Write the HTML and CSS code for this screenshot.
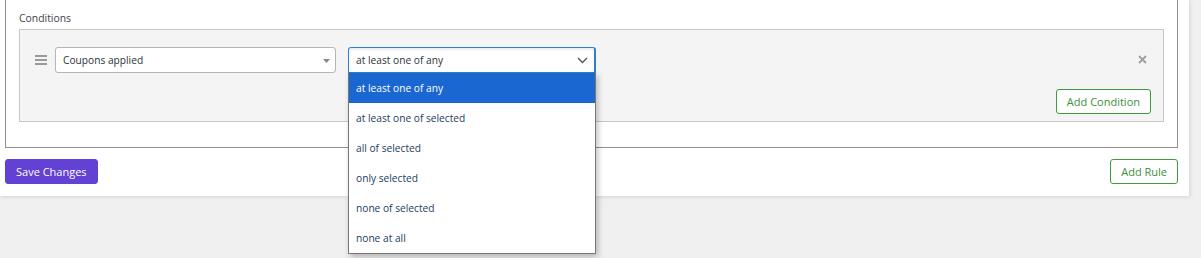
FILE: index.html
```html
<!DOCTYPE html>
<html>
<head>
<meta charset="utf-8">
<link rel="stylesheet" href="styles.css">
</head>
<body>
<div class="card">
  <div class="rule">
    <div class="label">Conditions</div>
    <div class="conditions">
      <div class="row">
        <span class="handle"><i></i><i></i><i></i></span>
        <div class="select sel1">
          <span>Coupons applied</span>
          <svg class="tri" width="7" height="4" viewBox="0 0 7 4"><path d="M0 0h7L3.5 4z" fill="#888"/></svg>
        </div>
        <div class="select sel2">
          <span>at least one of any</span>
          <svg class="chev" width="11" height="7" viewBox="0 0 11 7"><path d="M1 1l4.5 4.5L10 1" fill="none" stroke="#555" stroke-width="1.4"/></svg>
          <ul class="menu">
            <li class="active">at least one of any</li>
            <li>at least one of selected</li>
            <li>all of selected</li>
            <li>only selected</li>
            <li>none of selected</li>
            <li>none at all</li>
          </ul>
        </div>
        <svg class="close" width="9" height="9" viewBox="0 0 9 9"><path d="M1 1l7 7M8 1L1 8" stroke="#9e9e9e" stroke-width="1.8"/></svg>
      </div>
      <div class="cond-foot">
        <button class="btn-green">Add Condition</button>
      </div>
    </div>
  </div>
  <div class="actions">
    <button class="btn-save">Save Changes</button>
    <button class="btn-green">Add Rule</button>
  </div>
</div>
</body>
</html>
```

FILE: styles.css
```css
html, body {
  margin: 0;
  padding: 0;
  background: #f0f0f0;
  font-family: "Open Sans", "Noto Sans", sans-serif;
  font-size: 10px;
  color: #2c3338;
}
body {
  min-height: 258px;
}
.card {
  width: 1189px;
  height: 196px;
  background: #fff;
  box-shadow: 1px 1px 4px rgba(0,0,0,0.12);
  box-sizing: border-box;
  padding: 0 11px 0 5px;
}
.rule {
  border: 1px solid #8f8f8f;
  border-top: none;
  height: 148px;
  box-sizing: border-box;
  padding: 12px 13px 0 13px;
}
.label {
  font-size: 10.4px;
  color: #3c434a;
  line-height: 13px;
  height: 17px;
}
.conditions {
  background: #f4f4f4;
  border: 1px solid #c8c8c8;
  height: 93px;
  box-sizing: border-box;
  padding: 17px 12px 0 15px;
}
.row {
  display: flex;
  align-items: center;
  height: 26px;
}
.handle {
  display: flex;
  flex-direction: column;
  gap: 2px;
  width: 12px;
  margin-right: 8px;
}
.handle i {
  display: block;
  height: 2px;
  background: #9a9a9a;
}
.select {
  position: relative;
  box-sizing: border-box;
  height: 26px;
  background: #fff;
  border: 1px solid #b5b5b5;
  border-radius: 3px;
  display: flex;
  align-items: center;
  padding: 0 7px;
  color: #2c3338;
  font-size: 10.2px;
}
.sel1 {
  width: 281px;
  margin-right: 12px;
}
.sel1 .tri {
  position: absolute;
  right: 5px;
  top: 11px;
}
.sel2 {
  width: 248px;
  border-color: #2f7fc9;
  border-width: 1px 2px 1px 1px;
  border-radius: 3px 3px 0 0;
  box-shadow: inset 0 2px 3px rgba(0,0,0,0.08);
}
.sel2 .chev {
  position: absolute;
  right: 6px;
  top: 9px;
}
.menu {
  position: absolute;
  left: -1px;
  top: 25px;
  width: 248px;
  margin: 0;
  padding: 0;
  list-style: none;
  background: #fff;
  border: 1px solid #777;
  border-top: none;
  box-sizing: border-box;
  box-shadow: 2px 3px 6px rgba(0,0,0,0.25);
  z-index: 5;
}
.menu li {
  height: 30px;
  line-height: 30px;
  padding-left: 7px;
  color: #1c3d5f;
}
.menu li.active {
  background: #1a67d2;
  color: #fff;
}
.close {
  margin-left: auto;
  margin-right: 4px;
  margin-top: -1px;
}
.cond-foot {
  display: flex;
  justify-content: flex-end;
  margin-top: 16px;
}
button {
  font-family: "Open Sans", "Noto Sans", sans-serif;
  font-size: 11px;
  height: 25px;
  box-sizing: border-box;
  border-radius: 3px;
  cursor: pointer;
  padding: 0 10px;
}
.btn-green {
  background: #fff;
  border: 1px solid #3f9a3f;
  color: #3a8f3a;
}
.actions {
  display: flex;
  justify-content: space-between;
  margin-top: 11px;
}
.btn-save {
  background: #6241d4;
  border: 1px solid #6241d4;
  color: #fff;
  padding: 0 10px;
}
```
